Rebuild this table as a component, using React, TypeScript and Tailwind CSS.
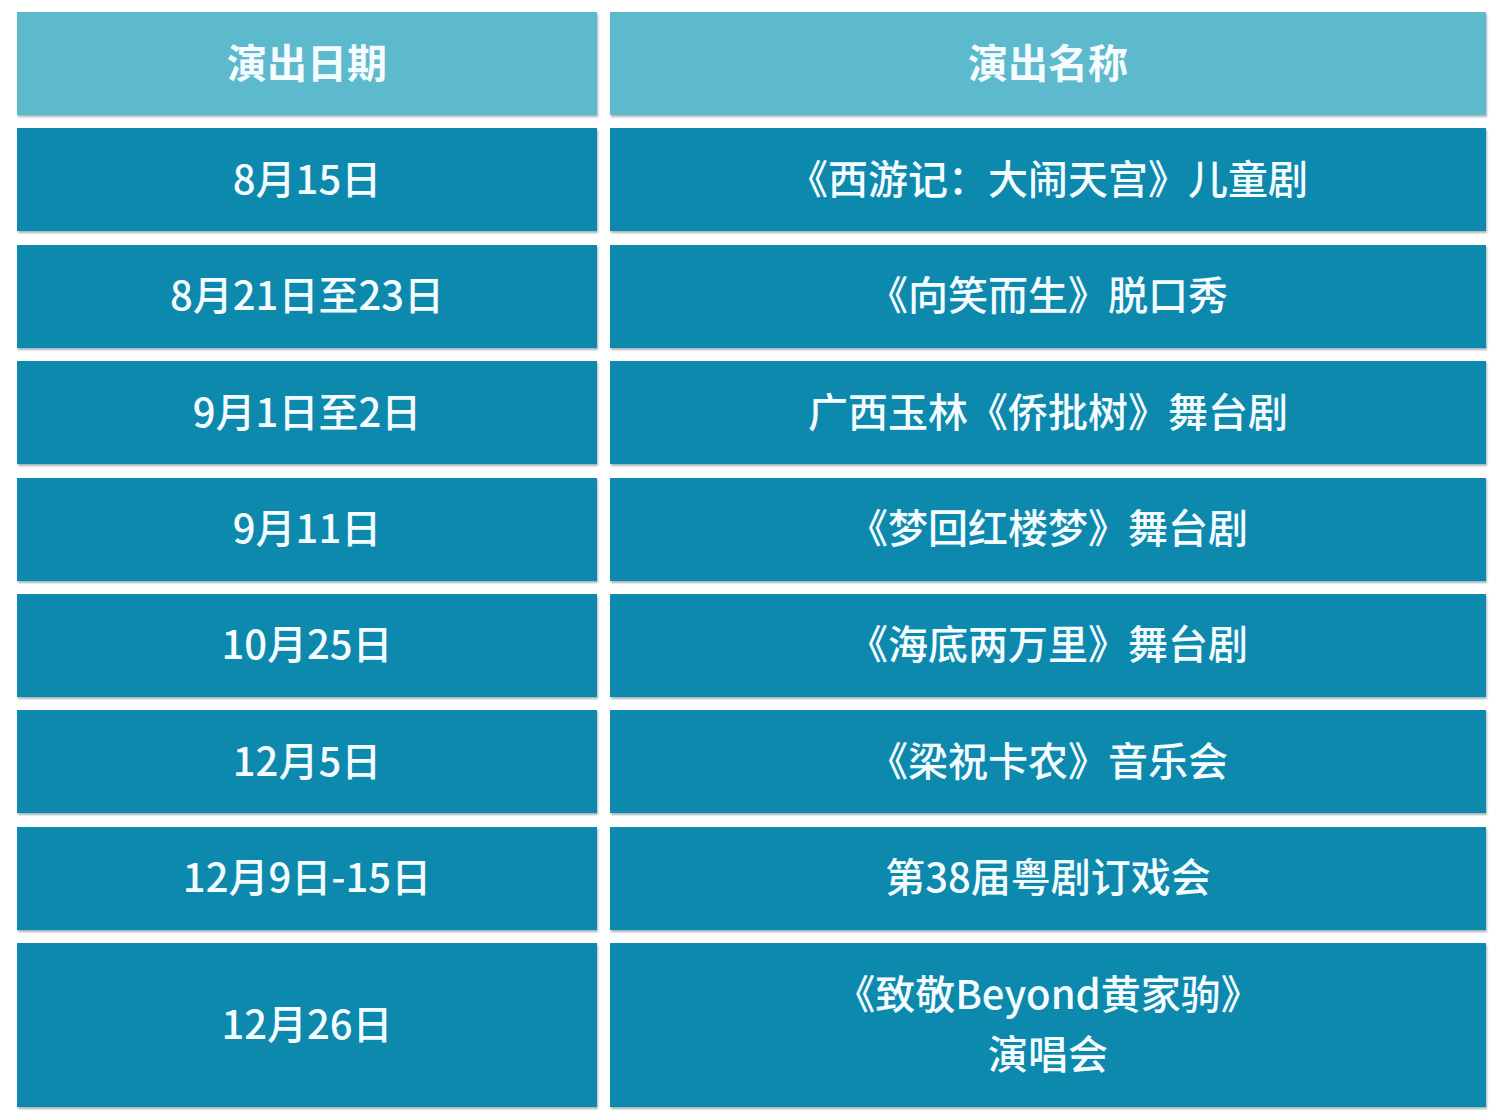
import React from "react";

const rows: Array<{ date: string; name: string[] }> = [
  { date: "8月15日", name: ["《西游记：大闹天宫》儿童剧"] },
  { date: "8月21日至23日", name: ["《向笑而生》脱口秀"] },
  { date: "9月1日至2日", name: ["广西玉林《侨批树》舞台剧"] },
  { date: "9月11日", name: ["《梦回红楼梦》舞台剧"] },
  { date: "10月25日", name: ["《海底两万里》舞台剧"] },
  { date: "12月5日", name: ["《梁祝卡农》音乐会"] },
  { date: "12月9日-15日", name: ["第38届粤剧订戏会"] },
  { date: "12月26日", name: ["《致敬Beyond黄家驹》", "演唱会"] },
];

const font = {
  fontFamily: '"Noto Sans CJK SC", "Noto Sans", sans-serif',
};

const Cell = ({ children, head, tall }: { children: React.ReactNode; head?: boolean; tall?: boolean }) => (
  <div
    className={`flex flex-col items-center justify-center pb-[6px] text-center text-[40px] leading-[60px] text-[#f4fcff] shadow-[1px_2px_2px_rgba(0,40,60,0.35)] ${
      head ? "bg-[#5db9cc] font-bold h-[103px]" : "bg-[#0d89ae] font-medium h-[103px]"
    } ${tall ? "h-[164px]" : ""}`}
  >
    {children}
  </div>
);

export default function App() {
  return (
    <div className="w-[1500px] h-[1117px] bg-white pl-[17px] pt-[12px]" style={font}>
      <div className="grid grid-cols-[580px_876px] gap-x-[13px] gap-y-[13.4px]">
        <Cell head>演出日期</Cell>
        <Cell head>演出名称</Cell>
        {rows.map((r, i) => (
          <React.Fragment key={i}>
            <Cell tall={r.name.length > 1}>{r.date}</Cell>
            <Cell tall={r.name.length > 1}>
              {r.name.map((n, j) => (
                <span key={j}>{n}</span>
              ))}
            </Cell>
          </React.Fragment>
        ))}
      </div>
    </div>
  );
}
